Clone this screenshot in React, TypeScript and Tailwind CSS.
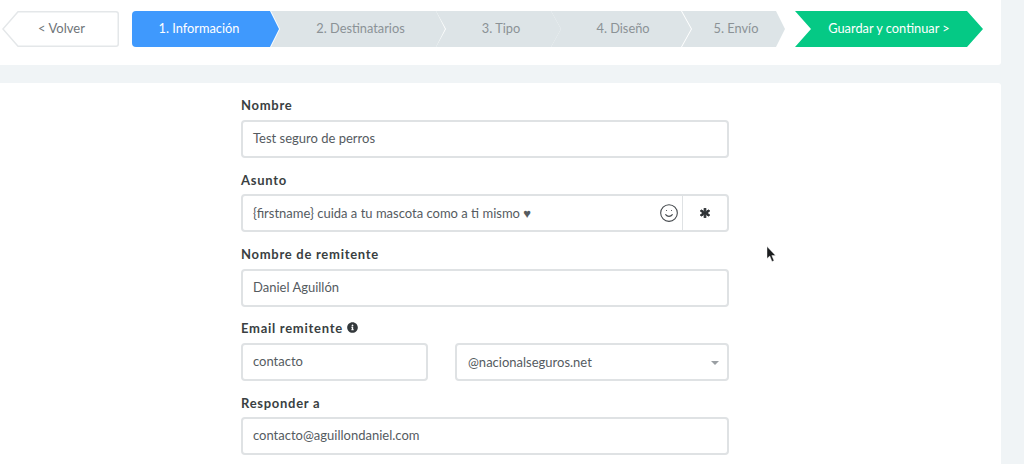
import { Smile } from "lucide-react";
import { FaAsterisk, FaInfoCircle } from "react-icons/fa";

function Field({ label, value, labelClass = "" }: { label: string; value: string; labelClass?: string }) {
  return (
    <div className="mb-[13.25px]">
      <div className={`h-[23px] text-[13px] leading-4 font-bold tracking-[0.72px] text-[#3a3f42] ${labelClass}`}>{label}</div>
      <div className="flex h-[38px] items-center rounded-[4px] border-2 border-[#dfe2e4] px-[10px] text-[13px] text-[#555b5f]">{value}</div>
    </div>
  );
}

function Step({ label, className }: { label: string; className: string }) {
  return (
    <div className={`flex h-9 items-center justify-center text-[12.8px] ${className}`}>{label}</div>
  );
}

export default function App() {
  return (
    <div className="relative flex h-[464px] w-[1024px] overflow-hidden bg-[#f0f4f6] font-['Lato','Noto_Sans',sans-serif]">
      <div className="flex w-[1001px] flex-col gap-[18px]">
        <header className="flex h-[65px] shrink-0 items-start rounded-br-[3px] bg-white pt-[11px] pl-[2px]">
          <div className="relative flex h-9 w-[117px] items-center justify-center text-[13px] text-[#6f7579]">
            <svg className="absolute inset-0" width="117" height="36" viewBox="0 0 117 36" fill="none">
              <path d="M16 .75H114a2.25 2.25 0 0 1 2.25 2.25V33a2.25 2.25 0 0 1-2.25 2.25H16L.9 18Z" fill="#fff" stroke="#e4e7e9" strokeWidth="1.5" />
            </svg>
            <span className="relative pl-[2px]">&lt; Volver</span>
          </div>
          <div className="ml-[13px] flex w-[653px]">
            <Step label="1. Información" className="relative z-10 w-[147px] rounded-l-[4px] bg-[#3f99fd] pr-[13px] text-white [clip-path:polygon(0_0,138px_0,100%_50%,138px_100%,0_100%)]" />
            <Step label="2. Destinatarios" className="-ml-[8px] w-[174px] bg-[#dde4e7] pl-[5px] text-[#8b9296] [clip-path:polygon(0_0,165px_0,100%_50%,165px_100%,0_100%,9px_50%)]" />
            <Step label="3. Tipo" className="-ml-[9px] w-[125px] bg-[#dde4e7] pl-[5px] text-[#8b9296] [clip-path:polygon(0_0,115px_0,100%_50%,115px_100%,0_100%,10px_50%)]" />
            <Step label="4. Diseño" className="-ml-[10px] w-[140px] bg-[#dde4e7] pl-[4px] text-[#8b9296] [clip-path:polygon(0_0,130px_0,100%_50%,130px_100%,0_100%,10px_50%)]" />
            <Step label="5. Envío" className="-ml-[9px] w-[103px] bg-[#dde4e7] pl-[5px] text-[#8b9296] [clip-path:polygon(0_0,94px_0,100%_50%,94px_100%,0_100%,10px_50%)]" />
          </div>
          <Step label="Guardar y continuar >" className="ml-[10px] w-[188px] bg-[#05c985] text-white [clip-path:polygon(0_0,172px_0,100%_50%,172px_100%,0_100%,16px_50%)]" />
        </header>
        <main className="flex-1 rounded-tr-[3px] bg-white pt-[14px] pl-[241px]">
          <div className="w-[488px]">
            <Field label="Nombre" value="Test seguro de perros" />
            <div className="mb-[13.25px]">
              <div className="h-[23px] pt-px text-[13px] leading-4 font-bold tracking-[0.72px] text-[#3a3f42]">Asunto</div>
              <div className="flex h-[38px] items-stretch rounded-[4px] border-2 border-[#dfe2e4] text-[13px] text-[#555b5f]">
                <div className="flex flex-1 items-center justify-between pr-[3px] pl-[10px]">
                  <span>{"{firstname} cuida a tu mascota como a ti mismo ♥"}</span>
                  <Smile size={20} strokeWidth={1.3} className="text-[#44494d]" />
                </div>
                <div className="flex w-[45px] items-center justify-center border-l border-[#dfe2e4]">
                  <FaAsterisk size={10} stroke="currentColor" strokeWidth={50} className="text-[#2c3033]" />
                </div>
              </div>
            </div>
            <Field label="Nombre de remitente" value="Daniel Aguillón" />
            <div className="mb-[13.25px]">
              <div className="flex h-[23px] items-start gap-[4px] text-[13px] leading-4 font-bold tracking-[0.72px] text-[#3a3f42]">
                Email remitente
                <FaInfoCircle size={11} className="mt-[2px] text-[#33383b]" />
              </div>
              <div className="flex gap-[27px] text-[13px] text-[#555b5f]">
                <div className="flex h-[38px] w-[187px] items-center rounded-[4px] border-2 border-[#dfe2e4] px-[10px]">contacto</div>
                <div className="flex h-[38px] flex-1 items-center justify-between rounded-[4px] border-2 border-[#dfe2e4] pt-[2px] pr-[8px] pl-[11px]">
                  <span>@nacionalseguros.net</span>
                  <svg width="8" height="4" viewBox="0 0 8 4"><path d="M0 0h8L4 4Z" fill="#9a9fa3" /></svg>
                </div>
              </div>
            </div>
            <Field label="Responder a" value="contacto@aguillondaniel.com" labelClass="pt-px" />
          </div>
        </main>
      </div>
      <svg className="absolute top-[246px] left-[766px]" width="12" height="17" viewBox="0 0 12 17">
        <path d="M1 0.5V12.5L3.8 10L6 15.5L8 14.7L5.8 9.5H9.5Z" fill="#1b1d1f" stroke="#fff" strokeWidth="0.4" />
      </svg>
    </div>
  );
}
